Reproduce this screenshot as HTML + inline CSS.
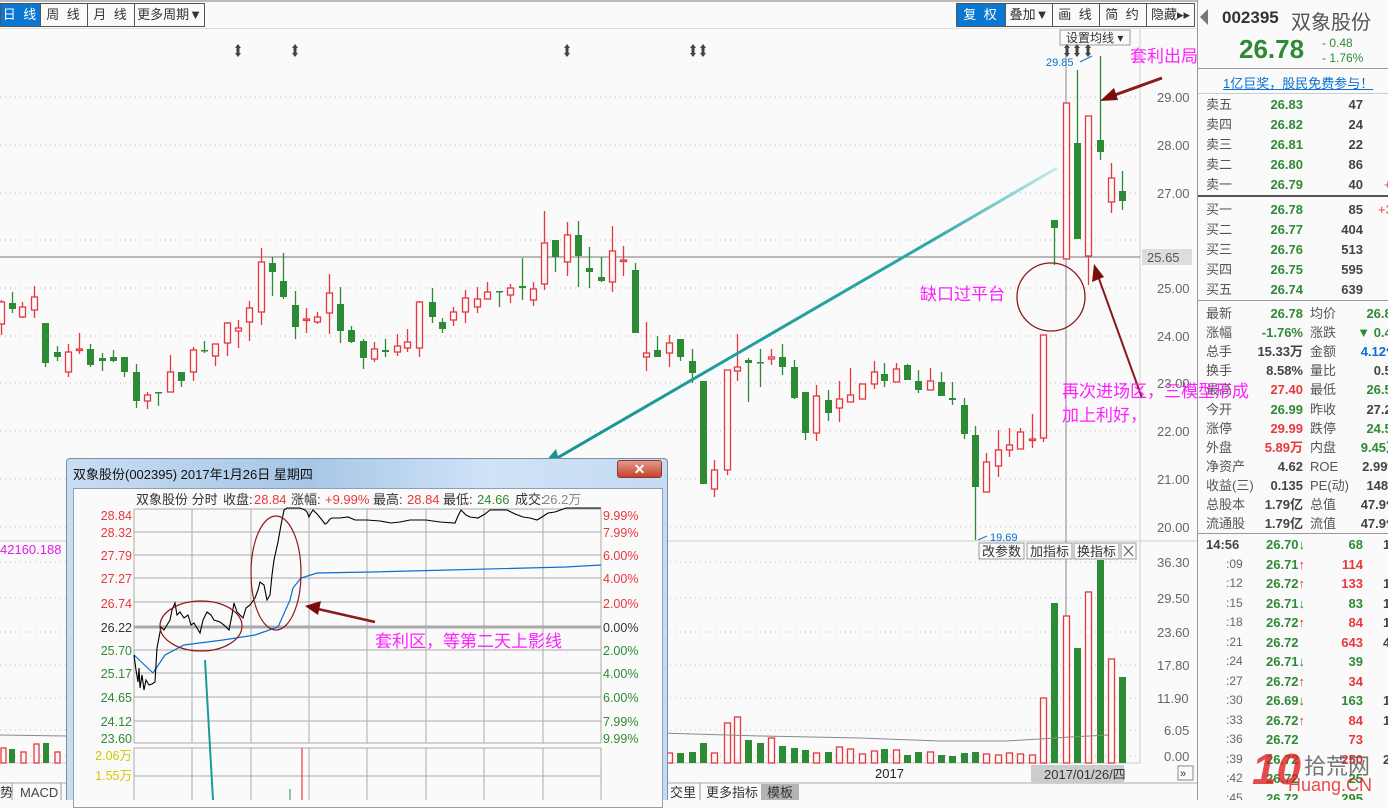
<!DOCTYPE html>
<html><head><meta charset="utf-8">
<style>
*{margin:0;padding:0;box-sizing:border-box}
body{width:1388px;height:800px;overflow:hidden;background:#fafafa;font-family:"Liberation Sans","Noto Sans CJK SC",sans-serif;position:relative}
.a{position:absolute;white-space:nowrap}
.btn{position:absolute;top:3px;height:24px;border:1px solid #555;background:#fafafa;font-size:13px;color:#333;text-align:center;line-height:22px;letter-spacing:2px}
.act{background:#0a78d2;color:#fff}
#rp{position:absolute;left:1197px;top:0;width:191px;height:800px;background:#fafafa;border-left:1px solid #999;overflow:hidden}
.r{position:absolute;left:0;width:220px;height:19px;font-size:13px;line-height:19px}
.l1{position:absolute;left:8px;color:#555}
.v1{position:absolute;right:115px;font-weight:bold;color:#2e8b35}
.v2{position:absolute;right:55px;font-weight:bold;color:#444}
.l2{position:absolute;left:112px;color:#555}
.v3{position:absolute;right:19px;font-weight:bold;color:#444}
.g{color:#2e8b35}.rd{color:#e8383d}.b{color:#0a6fd0}
.hl{position:absolute;left:0;width:191px;height:1px;background:#999}
</style></head><body>
<!-- top bar -->
<div class="a" style="left:0;top:0;width:1197px;height:2px;background:#bbb"></div>
<div class="a" style="left:0;top:28px;width:1197px;height:1px;background:#ddd"></div>
<div class="btn act" style="left:0;width:41px">日 线</div>
<div class="btn" style="left:40px;width:48px">周 线</div>
<div class="btn" style="left:87px;width:48px">月 线</div>
<div class="btn" style="left:134px;width:71px;letter-spacing:0">更多周期▼</div>
<div class="btn act" style="left:956px;width:50px">复 权</div>
<div class="btn" style="left:1005px;width:48px;letter-spacing:0">叠加▼</div>
<div class="btn" style="left:1052px;width:48px">画 线</div>
<div class="btn" style="left:1099px;width:48px">简 约</div>
<div class="btn" style="left:1146px;width:49px;letter-spacing:0">隐藏▸▸</div>

<svg class="a" style="left:0;top:0" width="1197" height="800" id="main">
<defs>
<linearGradient id="tg" x1="1057" y1="168" x2="545" y2="466" gradientUnits="userSpaceOnUse">
<stop offset="0" stop-color="#c8ecec"/><stop offset="0.25" stop-color="#2aa8a8"/><stop offset="1" stop-color="#159494"/></linearGradient>
</defs>
<g id="grid" stroke="#bbb" stroke-dasharray="1,4"></g>
<line x1="1140" y1="29" x2="1140" y2="763" stroke="#ccc"/>
<line x1="0" y1="541" x2="1197" y2="541" stroke="#ccc"/>
<line x1="0" y1="763" x2="1140" y2="763" stroke="#ccc"/>
<line x1="0" y1="783" x2="1197" y2="783" stroke="#aaa"/>
<g id="ax" font-size="13" fill="#666" font-family="Liberation Sans"></g>
<line x1="0" y1="257" x2="1140" y2="257" stroke="#777"/>
<line x1="1066" y1="45" x2="1066" y2="763" stroke="#888"/>
<g id="cand"></g>
<g id="vol"></g>
<polyline fill="none" stroke="#888" points="660,733 760,736 860,738 940,741 1005,741 1040,739 1070,737 1108,735"/>
<polyline fill="none" stroke="#888" points="0,735 66,736"/>
<rect x="1142" y="249" width="50" height="16" fill="#ddd"/>
<text x="1147" y="262" font-size="13" fill="#555">25.65</text>
<rect x="1060" y="30" width="70" height="15" fill="#fafafa" stroke="#999"/>
<text x="1066" y="42" font-size="12" fill="#333">设置均线 ▾</text>
<g fill="#444" id="mk"></g>
<text x="1046" y="66" font-size="11" fill="#0a6fd0">29.85</text>
<polyline points="1080,62 1092,56" stroke="#0a6fd0" fill="none"/>
<text x="990" y="541" font-size="11" fill="#0a6fd0">19.69</text>
<polyline points="978,540 987,536" stroke="#0a6fd0" fill="none"/>
<g font-size="13" fill="#333">
<rect x="979" y="543" width="45" height="16" fill="#fafafa" stroke="#999"/><text x="982" y="556">改参数</text>
<rect x="1027" y="543" width="45" height="16" fill="#fafafa" stroke="#999"/><text x="1030" y="556">加指标</text>
<rect x="1074" y="543" width="45" height="16" fill="#fafafa" stroke="#999"/><text x="1077" y="556">换指标</text>
<rect x="1121" y="543" width="15" height="16" fill="#fafafa" stroke="#999"/><path d="M1124 546l9 10M1133 546l-9 10" stroke="#555"/>
</g>
<text x="0" y="554" font-size="13" fill="#e020e0">42160.188</text>
<text x="875" y="778" font-size="13" fill="#222">2017</text>
<rect x="1031" y="765" width="93" height="18" fill="#ccc"/>
<text x="1044" y="779" font-size="13" fill="#333">2017/01/26/四</text>
<rect x="1178" y="766" width="15" height="14" fill="#fafafa" stroke="#888"/>
<text x="1180" y="777" font-size="11" fill="#333">»</text>
<g font-size="13" fill="#333">
<line x1="700" y1="783" x2="700" y2="800" stroke="#999"/><text x="670" y="797">交里</text>
<text x="706" y="797">更多指标</text><rect x="761" y="784" width="38" height="16" fill="#b4b4b4"/><text x="767" y="797">模板</text>
<line x1="12" y1="783" x2="12" y2="800" stroke="#999"/><line x1="61" y1="783" x2="61" y2="800" stroke="#999"/>
<text x="0" y="797">势</text><text x="20" y="797" fill="#444">MACD</text>
</g>
<line x1="1057" y1="168" x2="552" y2="461" stroke="url(#tg)" stroke-width="3"/>
<path d="M540 468L556 449L560 464Z" fill="#159494"/>
<ellipse cx="1051" cy="297" rx="34" ry="34" fill="none" stroke="#8b1a1a" stroke-width="1.3"/>
<line x1="1162" y1="78" x2="1112" y2="96" stroke="#8b1a1a" stroke-width="3"/>
<path d="M1100 101L1114 88L1118 100Z" fill="#7a0c0c"/>
<line x1="1142" y1="398" x2="1098" y2="276" stroke="#8b1a1a" stroke-width="2"/>
<path d="M1094 264L1092 282L1104 277Z" fill="#7a0c0c"/>
</svg>

<!-- right panel -->
<div id="rp">
<div class="a" style="left:2px;top:9px;width:0;height:0;border-top:8px solid transparent;border-bottom:8px solid transparent;border-right:8px solid #777"></div>
<div class="a" style="left:24px;top:8px;font-size:17px;font-weight:bold;color:#333">002395</div>
<div class="a" style="left:93px;top:6px;font-size:20px;color:#555">双象股份</div>
<div class="a" style="left:41px;top:34px;font-size:26px;font-weight:bold;color:#2e8b35">26.78</div>
<div class="a" style="left:124px;top:36px;font-size:12px;line-height:15px;color:#2e8b35">- 0.48<br>- 1.76%</div>
<div class="hl" style="top:68px"></div>
<div class="a" style="left:25px;top:73px;font-size:13px;color:#0a6fd0;text-decoration:underline">1亿巨奖，股民免费参与！</div>
<div class="hl" style="top:93px;background:#ccc"></div>
<div id="ob"></div>
<div class="hl" style="top:195px;height:2px;background:#555"></div>
<div class="hl" style="top:300px"></div>
<div class="hl" style="top:533px"></div>
<div class="a" style="left:-4px;top:340px;width:4px;height:120px;background:#bbb"></div>
</div>
<div class="a" style="left:1248px;top:745px;width:140px;height:55px;opacity:0.8">
<div class="a" style="left:4px;top:0;font-size:44px;font-weight:bold;color:#e02020;font-style:italic;line-height:50px">10</div>
<div class="a" style="left:56px;top:4px;font-size:22px;color:#555">拾荒网</div>
<div class="a" style="left:40px;top:30px;font-size:18px;color:#e02020">Huang.CN</div>
</div>

<!-- annotation text overlay -->
<svg class="a" style="left:0;top:0" width="1388" height="800">
<g font-size="17" fill="#ff20ff" font-family="Liberation Sans,Noto Sans CJK SC,sans-serif">
<text x="1130" y="62">套利出局</text>
<text x="920" y="300">缺口过平台</text>
<text x="1062" y="397">再次进场区，三模型形成</text>
<text x="1062" y="421">加上利好，</text>
</g>
</svg>

<!-- popup -->
<div class="a" style="left:66px;top:458px;width:602px;height:342px;border:1px solid #7d8ea8;border-bottom:none;background:linear-gradient(90deg,#c9ddf2,#a7c6e6 40%,#cfe3f7 70%,#c5dbf1);border-radius:4px 4px 0 0">
<div class="a" style="left:6px;top:5px;font-size:13px;color:#111">双象股份(002395) 2017年1月26日 星期四</div>
<div class="a" style="left:550px;top:1px;width:45px;height:18px;background:linear-gradient(#e29a8c,#c8412c);border:1px solid #8a3a30;border-radius:3px;color:#fff;font-size:14px;font-weight:bold;text-align:center;line-height:16px">✕</div>
<div class="a" style="left:6px;top:29px;width:590px;height:320px;background:#fafafa;border:1px solid #8aa0b8"></div>
</div>
<svg class="a" style="left:0;top:0" width="700" height="800" id="pop">
<g font-size="13" font-family="Liberation Sans,Noto Sans CJK SC,sans-serif">
<text x="136" y="504" fill="#333">双象股份 分时</text>
<text x="223" y="504" fill="#333">收盘:</text><text x="254" y="504" fill="#e8383d">28.84</text>
<text x="291" y="504" fill="#333">涨幅:</text><text x="325" y="504" fill="#e8383d">+9.99%</text>
<text x="373" y="504" fill="#333">最高:</text><text x="407" y="504" fill="#e8383d">28.84</text>
<text x="443" y="504" fill="#333">最低:</text><text x="477" y="504" fill="#2e8b35">24.66</text>
<text x="515" y="504" fill="#333">成交:</text><text x="543" y="504" fill="#888">26.2万</text>
</g>
<g id="pg" stroke="#aaa"></g>
<g id="pl" font-size="12.5" font-family="Liberation Sans"></g>
<polyline fill="none" stroke="#0a6fd0" stroke-width="1.2" points="134,655 153,673 165,655 184,645 223,640 255,635 278,627 290,600 293,588 301,578 317,573 371,572 449,570 566,567 601,565"/>
<polyline fill="none" stroke="#000" stroke-width="1.1" points="134,655 136,670 138,682 139,668 140,688 142,675 144,690 146,680 149,685 152,684 155,682 157,648 161,627 164,630 167,625 170,620 172,610 175,603 177,615 180,612 184,618 188,615 191,625 194,623 197,628 200,633 203,620 207,612 211,615 214,620 220,622 224,625 229,630 232,615 234,603 237,612 240,615 243,618 246,608 250,605 255,598 258,590 260,582 264,585 267,600 270,595 272,575 274,560 278,542 281,525 284,510 287,508 300,508 305,510 307,512 309,517 311,513 313,510 318,515 322,520 325,524 327,523 330,519 332,518 340,518 348,517 355,520 367,520 380,521 391,523 400,522 410,520 426,520 440,522 455,523 458,516 461,510 466,515 470,517 478,518 485,514 490,510 500,510 507,510 515,514 523,517 530,518 537,520 542,517 548,513 555,512 566,508 601,508"/>
<ellipse cx="201" cy="626" rx="41" ry="25" fill="none" stroke="#8b1a1a" stroke-width="1.2"/>
<ellipse cx="276" cy="573" rx="25" ry="57" fill="none" stroke="#8b1a1a" stroke-width="1.2"/>
<line x1="375" y1="622" x2="318" y2="609" stroke="#8b1a1a" stroke-width="2.5"/>
<path d="M305 606L321 601L318 615Z" fill="#7a0c0c"/>
<text x="375" y="647" font-size="17" fill="#ff20ff" font-family="Liberation Sans,Noto Sans CJK SC,sans-serif">套利区，等第二天上影线</text>
<line x1="205" y1="660" x2="213" y2="800" stroke="#1a9a9a" stroke-width="2"/>
<line x1="302" y1="748" x2="302" y2="800" stroke="#e8383d" stroke-width="1.2"/>
<line x1="290" y1="789" x2="290" y2="800" stroke="#2e8b35"/>
</svg>

<script>
var NS="http://www.w3.org/2000/svg";
function el(p,t,a,txt){var e=document.createElementNS(NS,t);for(var k in a)e.setAttribute(k,a[k]);if(txt!=null)e.textContent=txt;p.appendChild(e);return e;}
var G=document.getElementById('grid'),AX=document.getElementById('ax');
var pr=[[29,97],[28,145],[27,193],[26,240],[25,288],[24,336],[23,383],[22,431],[21,479],[20,527]];
pr.forEach(function(p){el(G,'line',{x1:0,y1:p[1],x2:1140,y2:p[1]});if(p[0]!=26)el(AX,'text',{x:1157,y:p[1]+5},p[0].toFixed(2));});
var vl=[[36.30,562],[29.50,598],[23.60,632],[17.80,665],[11.90,698],[6.05,730],[0,756]];
vl.forEach(function(p){el(G,'line',{x1:0,y1:p[1],x2:1140,y2:p[1]});el(AX,'text',{x:p[0]<10?1164:1157,y:p[1]+5},p[0].toFixed(2));});
var C=[[1,302,324,300,335,'r'],[12,303,309,292,313,'g'],[22,307,317,302,318,'r'],[34,297,310,286,318,'r'],[45,323,363,323,367,'g'],[57,352,357,346,361,'g'],[68,352,372,344,377,'r'],[79,349,350,333,354,'r'],[90,349,365,344,367,'g'],[102,358,361,353,371,'g'],[113,357,361,350,362,'g'],[124,357,372,357,377,'g'],[136,372,401,364,408,'g'],[147,395,401,392,409,'r'],[158,392,393,392,406,'g'],[170,372,392,355,392,'r'],[181,372,381,372,387,'g'],[193,350,372,347,381,'r'],[204,350,351,341,353,'g'],[215,344,356,344,366,'r'],[227,323,343,322,356,'r'],[238,328,331,320,348,'r'],[249,308,322,301,341,'r'],[261,262,312,248,325,'r'],[272,263,272,257,296,'g'],[283,281,297,253,299,'g'],[295,305,327,291,339,'g'],[306,319,320,308,333,'r'],[317,317,322,312,324,'r'],[329,293,313,274,334,'r'],[340,304,331,287,343,'g'],[351,330,342,326,343,'g'],[363,341,358,339,369,'g'],[374,349,359,342,362,'r'],[385,350,352,339,357,'g'],[397,346,352,334,356,'r'],
[407,342,348,329,352,'r'],[419,302,348,301,357,'r'],[432,302,317,288,323,'g'],[442,322,329,318,333,'g'],[453,312,320,307,326,'r'],[465,298,312,290,323,'r'],[477,299,307,287,313,'r'],[487,292,299,282,299,'r'],[499,291,292,291,307,'g'],[510,288,295,284,303,'r'],[522,286,288,258,300,'g'],[533,289,300,282,306,'r'],[544,243,284,211,290,'r'],[555,240,257,240,272,'g'],[567,235,262,222,276,'r'],[578,235,256,221,287,'g'],[589,268,272,247,288,'g'],[601,277,281,257,282,'g'],[612,251,282,226,292,'r'],[623,260,261,246,276,'r'],[635,270,333,263,333,'g'],[646,353,357,322,371,'r'],[657,350,357,336,357,'g'],[669,343,353,335,367,'r'],[680,339,357,339,361,'g'],[692,361,373,349,383,'g'],[703,381,484,381,484,'g'],[714,470,489,460,497,'r'],[727,370,470,370,475,'r'],[737,367,371,334,381,'r'],[748,360,363,358,402,'g'],[760,362,363,349,387,'g'],[771,357,359,349,365,'r'],[782,357,367,344,375,'g'],[794,367,398,360,399,'g'],
[805,392,433,392,440,'g'],[816,396,433,385,441,'r'],[828,400,413,390,421,'g'],[839,399,408,381,422,'r'],[850,395,402,368,402,'r'],[862,384,399,384,399,'r'],[874,372,384,361,389,'r'],[884,374,381,363,387,'g'],[896,369,382,363,382,'r'],[907,365,380,364,380,'g'],[918,381,390,370,393,'g'],[930,381,390,368,390,'r'],[941,382,396,372,396,'g'],[952,398,400,382,405,'g'],[964,405,434,398,439,'g'],[975,435,487,426,540,'g'],[986,462,492,453,492,'r'],[998,450,466,430,477,'r'],[1009,445,450,428,457,'r'],[1020,432,449,428,449,'r'],[1032,439,440,414,448,'r'],[1043,335,438,335,442,'r'],
[1054,220,228,220,265,'g'],[1066,103,259,103,259,'r'],[1077,143,239,70,239,'g'],[1088,116,256,116,285,'r'],[1100,140,152,56,160,'g'],[1111,178,202,163,213,'r'],[1122,191,201,171,210,'g']];
var CD=document.getElementById('cand');
var RED='#e8383d',GRN='#2e8b35';
C.forEach(function(c){var col=c[5]=='r'?RED:GRN;
el(CD,'line',{x1:c[0]+.5,y1:c[3],x2:c[0]+.5,y2:c[4],stroke:col,'stroke-width':1.3});
var h=Math.max(c[2]-c[1],1.5);
if(c[5]=='r')el(CD,'rect',{x:c[0]-2.5,y:c[1],width:6,height:h,fill:'#fafafa',stroke:col,'stroke-width':1.3});
else el(CD,'rect',{x:c[0]-3,y:c[1],width:7,height:h,fill:col});});
var vt=[753,753,752,743,753,723,717,740,743,738,746,748,750,753,752,747,749,754,751,749,750,755,752,752,755,756,753,752,754,755,753,754,755,698,603,616,648,592,560,659,677];
var V=document.getElementById('vol');
var vc=C.filter(function(c){return c[0]>=669;});
vc.forEach(function(c,i){var t=vt[i];var col=c[5]=='r'?RED:GRN;
if(c[5]=='r')el(V,'rect',{x:c[0]-2.5,y:t,width:6,height:763-t,fill:'#fafafa',stroke:col,'stroke-width':1.3});
else el(V,'rect',{x:c[0]-3,y:t,width:7,height:763-t,fill:col});});
[[1,748,'r'],[9,749,'g'],[21,752,'r'],[34,744,'r'],[43,743,'g'],[55,752,'r']].forEach(function(v){var col=v[2]=='r'?RED:GRN;
if(v[2]=='r')el(V,'rect',{x:v[0],y:v[1],width:5,height:763-v[1],fill:'#fafafa',stroke:col,'stroke-width':1.3});else el(V,'rect',{x:v[0],y:v[1],width:6,height:763-v[1],fill:col});});
var MK=document.getElementById('mk');
[238,295,567,693,703,1067,1077,1088].forEach(function(x){el(MK,'rect',{x:x-1.5,y:46,width:3,height:9});el(MK,'path',{d:'M'+(x-3)+' 48L'+x+' 44L'+(x+3)+' 48ZM'+(x-3)+' 53L'+x+' 57L'+(x+3)+' 53Z'});});
var PG=document.getElementById('pg'),PL=document.getElementById('pl');
[134,192,251,309,367,426,484,543,601].forEach(function(x){el(PG,'line',{x1:x,y1:509,x2:x,y2:743});el(PG,'line',{x1:x,y1:748,x2:x,y2:800});});
var py=[[509,'28.84','9.99%',515,RED],[532,'28.32','7.99%',532,RED],[555,'27.79','6.00%',555,RED],[578,'27.27','4.00%',578,RED],[602,'26.74','2.00%',603,RED],[627,'26.22','0.00%',627,'#333'],[650,'25.70','2.00%',650,GRN],[673,'25.17','4.00%',673,GRN],[697,'24.65','6.00%',697,GRN],[721,'24.12','7.99%',721,GRN],[743,'23.60','9.99%',738,GRN]];
py.forEach(function(p){el(PG,'line',{x1:134,y1:p[0],x2:601,y2:p[0],'stroke-width':p[1]=='26.22'?3:1});
el(PL,'text',{x:132,y:p[3]+5,'text-anchor':'end',fill:p[4]},p[1]);el(PL,'text',{x:603,y:p[3]+5,fill:p[4]},p[2]);});
[748,776].forEach(function(y){el(PG,'line',{x1:134,y1:y,x2:601,y2:y});});
el(PL,'text',{x:132,y:760,'text-anchor':'end',fill:'#d4c800'},'2.06万');
el(PL,'text',{x:132,y:780,'text-anchor':'end',fill:'#d4c800'},'1.55万');
var OB=document.getElementById('ob');
function row(y,h){var d=document.createElement('div');d.className='r';d.style.top=(y-9)+'px';d.innerHTML=h;OB.appendChild(d);}
[['卖五','26.83','47',104],['卖四','26.82','24',124],['卖三','26.81','22',144],['卖二','26.80','86',164],['卖一','26.79','40',184],['买一','26.78','85',209],['买二','26.77','404',229],['买三','26.76','513',249],['买四','26.75','595',269],['买五','26.74','639',289]].forEach(function(r){
row(r[3],'<span class="l1">'+r[0]+'</span><span class="v1">'+r[1]+'</span><span class="v2">'+r[2]+'</span>'+(r[0]=='卖一'?'<span class="a rd" style="left:186px">+</span>':'')+(r[0]=='买一'?'<span class="a rd" style="left:180px">+3</span>':''));});
[['最新','26.78','g','均价','26.80','g'],['涨幅','-1.76%','g','涨跌','▼ 0.48','g'],['总手','15.33万','','金额','4.12亿','b'],['换手','8.58%','','量比','0.56',''],['最高','27.40','rd','最低','26.56','g'],['今开','26.99','g','昨收','27.26',''],['涨停','29.99','rd','跌停','24.53','g'],['外盘','5.89万','rd','内盘','9.45万','g'],['净资产','4.62','','ROE','2.99%',''],['收益(三)','0.135','','PE(动)','148.8',''],['总股本','1.79亿','','总值','47.9亿',''],['流通股','1.79亿','','流值','47.9亿','']].forEach(function(r,i){
var y=313+i*19.1;row(y,'<span class="l1">'+r[0]+'</span><span class="v1 '+r[2]+'" style="color:'+(r[2]==''?'#444':'')+'">'+r[1]+'</span><span class="l2">'+r[3]+'</span><span class="v3 '+r[5]+'">'+r[4]+'</span>');});
var tk=[['14:56','26.70','↓','68','g','1'],[':09','26.71','↑','114','rd',''],[':12','26.72','↑','133','rd','1'],[':15','26.71','↓','83','g','1'],[':18','26.72','↑','84','rd','1'],[':21','26.72','','643','rd','4'],[':24','26.71','↓','39','g',''],[':27','26.72','↑','34','rd',''],[':30','26.69','↓','163','g','1'],[':33','26.72','↑','84','rd','1'],[':36','26.72','','73','rd',''],[':39','26.72','','250','rd','2'],[':42','26.72','','25','g',''],[':45','26.72','','295','g','']];
tk.forEach(function(t,i){var y=544+i*19.5;var ar=t[2]?'<span class="'+(t[2]=='↑'?'rd':'g')+'" style="font-weight:bold">'+t[2]+'</span>':'';
row(y,(i==0?'<span class="l1" style="font-weight:bold;color:#444">'+t[0]+'</span>':'<span class="l1" style="left:28px;font-size:12px;color:#666">'+t[0]+'</span>')+'<span class="a g" style="left:68px;font-weight:bold">'+t[1]+ar+'</span><span class="v2 '+t[4]+'">'+t[3]+'</span><span class="a" style="left:185px;font-weight:bold;color:#444">'+t[5]+'</span>');});
</script>
</body></html>
